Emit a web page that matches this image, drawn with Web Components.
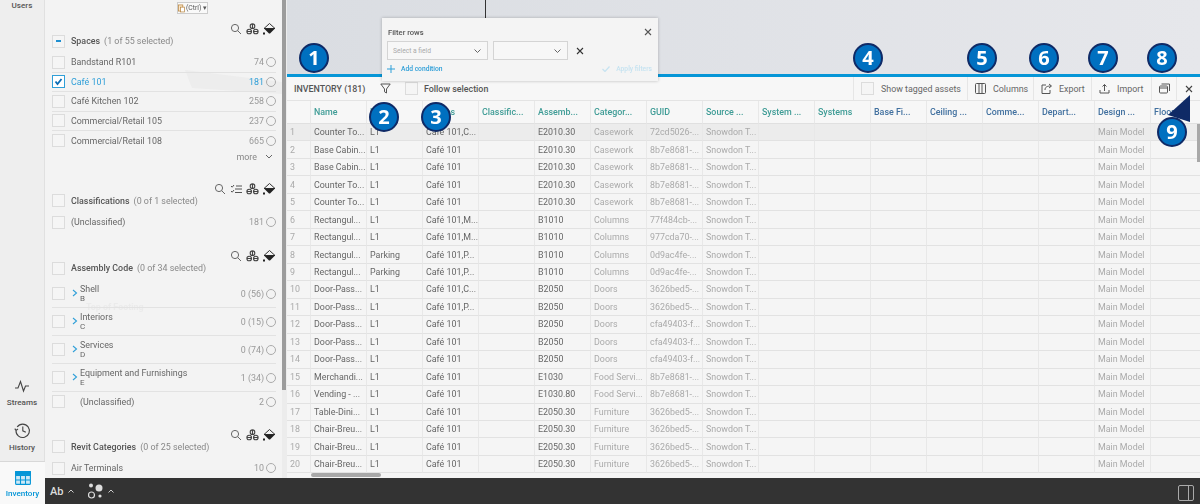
<!DOCTYPE html>
<html>
<head>
<meta charset="utf-8">
<style>
  html, body { margin: 0; padding: 0; height: 100%; overflow: hidden; background: #f4f4f4; }
  body { font-family: Roboto, "Noto Sans", sans-serif; font-size: 8.9px; color: #555; }
</style>
</head>
<body>
<app-shell>
  <side-rail slot="rail"></side-rail>
  <facet-panel slot="facets"></facet-panel>
  <model-view slot="view"></model-view>
  <inv-toolbar slot="toolbar"></inv-toolbar>
  <inv-table slot="table"></inv-table>
  <bottom-bar slot="bottom"></bottom-bar>
  <filter-popup slot="overlay"></filter-popup>
  <num-badge slot="overlay" style="left:299px;top:43px">1</num-badge>
  <num-badge slot="overlay" style="left:369px;top:102px">2</num-badge>
  <num-badge slot="overlay" style="left:421px;top:102px">3</num-badge>
  <num-badge slot="overlay" style="left:853px;top:43px">4</num-badge>
  <num-badge slot="overlay" style="left:967px;top:43px">5</num-badge>
  <num-badge slot="overlay" style="left:1029px;top:43px">6</num-badge>
  <num-badge slot="overlay" style="left:1088px;top:43px">7</num-badge>
  <num-badge slot="overlay" style="left:1147px;top:43px">8</num-badge>
  <num-badge slot="overlay" style="left:1157px;top:117px" arrow>9</num-badge>
</app-shell>

<script>
const ICONS = {
  search: '<svg width="12" height="12" viewBox="0 0 12 12" fill="none" stroke="#666" stroke-width="1"><circle cx="5" cy="5" r="3.6"/><path d="M7.7 7.7 11 11"/></svg>',
  checks: '<svg width="12" height="12" viewBox="0 0 12 12" fill="none" stroke="#555" stroke-width="1"><path d="M1 3l1.2 1.2L4 2M1 8l1.2 1.2L4 7M6 3h6M5 6h7M5 9.500h7"/></svg>',
  group: '<svg width="13" height="12" viewBox="0 0 13 12" fill="none" stroke="#444" stroke-width="1.1"><circle cx="6.500" cy="3.200" r="2.300"/><circle cx="3.200" cy="8.500" r="2.300"/><circle cx="9.800" cy="8.500" r="2.300"/><path d="M6.500 1v4.400M1 8.500h4.400M7.600 8.500H12"/></svg>',
  bucket: '<svg width="13" height="12" viewBox="0 0 13 12"><path d="M6.500.5 12 5.500H1z" fill="none" stroke="#333"/><path d="M1 5.500h11L7 10.500H6z" fill="#222"/><rect x="0" y="9.500" width="2" height="2" fill="#222"/></svg>',
  x: '<svg width="8" height="8" viewBox="0 0 8 8" fill="none" stroke="#444" stroke-width="1.100"><path d="M1 1l6 6M7 1 1 7"/></svg>'
};

class AppShell extends HTMLElement {
  constructor() {
    super();
    this.attachShadow({mode: 'open'}).innerHTML = `
      <style>
        :host { display: grid; grid-template-columns: 45px 1fr; width: 1200px; height: 504px; position: relative; overflow: hidden; filter: blur(.25px); }
        .work { display: grid; grid-template-rows: 478px 26px; min-width: 0; }
        .split { display: grid; grid-template-columns: 242px 1fr; min-height: 0; }
        .main { display: flex; flex-direction: column; min-width: 0; min-height: 0; }
      </style>
      <slot name="rail"></slot>
      <div class="work">
        <div class="split">
          <slot name="facets"></slot>
          <div class="main">
            <slot name="view"></slot>
            <slot name="toolbar"></slot>
            <slot name="table"></slot>
          </div>
        </div>
        <slot name="bottom"></slot>
      </div>
      <slot name="overlay"></slot>`;
  }
}

class SideRail extends HTMLElement {
  constructor() {
    super();
    this.attachShadow({mode: 'open'}).innerHTML = `
      <style>
        :host { display: flex; flex-direction: column; background: #eeeeee; border-right: 1px solid #e0e0e0; box-sizing: border-box; height: 504px; font-size: 8.100px; font-weight: 500; color: #555; text-align: center; }
        .users { height: 12px; line-height: 10px; }
        .grow { flex: 1; }
        .item { display: flex; flex-direction: column; align-items: center; justify-content: flex-end; height: 45px; gap: 3px; }
        .item svg { display: block; }
        .on { height: 43px; background: #f9f9f9; border-top: 1px solid #d8d8d8; color: #0696d7; box-sizing: border-box; padding-bottom: 6px; margin-top: 9px; margin-right: -1px; }
      </style>
      <div class="users">Users</div>
      <div class="grow"></div>
      <div class="item">
        <svg width="16" height="14" viewBox="0 0 16 14" fill="none" stroke="#444" stroke-width="1.100"><path d="M1 8 4 8 6.500 1.500 9.500 11 11.500 6 15 6"/></svg>
        <span>Streams</span>
      </div>
      <div class="item">
        <svg width="17" height="17" viewBox="0 0 17 17" fill="none" stroke="#444" stroke-width="1.100"><path d="M3.200 5A6.700 6.700 0 1 1 2 8.500M.8 6.600 2 8.500 4 7"/><path d="M8.800 4.500v4.300l3 1.400"/></svg>
        <span>History</span>
      </div>
      <div class="item on">
        <svg width="16" height="14" viewBox="0 0 16 14" fill="#cfe9f6" stroke="#0696d7" stroke-width="1.100"><rect x=".6" y=".6" width="14.800" height="12.800" rx="1"/><path d="M.6 4.500h14.800M.6 9h14.800M5.500 4.500v9M10.500 4.500v9" fill="none"/><rect x=".6" y=".6" width="14.800" height="2.800" fill="#0696d7"/></svg>
        <span>Inventory</span>
      </div>`;
  }
}

class FacetRow extends HTMLElement {
  constructor() {
    super();
    const tall = this.hasAttribute('code');
    const chev = this.hasAttribute('tree');
    const indent = this.hasAttribute('indent');
    this.attachShadow({mode: 'open'}).innerHTML = `
      <style>
        :host { display: flex; align-items: center; height: ${tall ? 28 : 19.5}px; box-sizing: border-box; border-bottom: 1px solid #e2e2e2; color: #666; }
        :host([last]) { border-bottom: 0; }
        :host([on]) { color: #2f9fd8; }
        .box { width: 11px; height: 11px; border: 1px solid #dcdcdc; background: #f5f5f5; flex: none; display: flex; }
        :host([on]) .box { border-color: #2f9fd8; background: #fff; }
        .chev { width: 8px; margin-left: 7px; flex: none; }
        .name { flex: 1; margin-left: ${chev ? 0 : (indent ? 15 : 6)}px; line-height: 10px; }
        .code { display: block; font-size: 8px; }
        .n { color: #999; margin-right: 2px; }
        :host([on]) .n { color: #2f9fd8; }
        .radio { width: 8px; height: 8px; border: 1px solid #aaa; border-radius: 50%; flex: none; }
      </style>
      <span class="box">${this.hasAttribute('on') ? '<svg width="11" height="11" viewBox="0 0 11 11" fill="none" stroke="#0a6cb5" stroke-width="1.800"><path d="M2.500 5.500 4.500 8 8.500 3"/></svg>' : ''}</span>
      ${chev ? '<span class="chev"><svg width="6" height="8" viewBox="0 0 6 8" fill="none" stroke="#2f9fd8" stroke-width="1.100"><path d="M1 1l3.500 3L1 7"/></svg></span>' : ''}
      <span class="name"><slot></slot>${tall ? '<span class="code">' + this.getAttribute('code') + '</span>' : ''}</span>
      <span class="n">${this.getAttribute('n')}</span>
      <span class="radio"></span>`;
  }
}

class FacetSection extends HTMLElement {
  constructor() {
    super();
    const icons = (this.getAttribute('icons') || 'search group bucket').split(' ').map(k => ICONS[k]).join('');
    const partial = this.hasAttribute('partial');
    this.attachShadow({mode: 'open'}).innerHTML = `
      <style>
        :host { display: block; }
        .tools { display: flex; justify-content: flex-end; align-items: center; gap: 4px; height: 14px; }
        .tools svg { display: block; }
        .head { display: flex; align-items: center; height: 14px; margin-top: -2px; margin-bottom: 5px; color: #888; }
        .box { width: 11px; height: 11px; border: 1px solid #dcdcdc; background: #f5f5f5; flex: none; margin-right: 6px; display: flex; align-items: center; justify-content: center; }
        .box i { width: 5px; height: 1.500px; background: #1f8fd0; }
        b { color: #555; font-weight: 500; margin-right: 4px; }
      </style>
      <div class="tools">${icons}</div>
      <div class="head"><span class="box">${partial ? '<i></i>' : ''}</span><b>${this.getAttribute('title')}</b> ${this.getAttribute('sel')}</div>
      <slot></slot>`;
  }
}

class FacetPanel extends HTMLElement {
  constructor() {
    super();
    this.attachShadow({mode: 'open'}).innerHTML = `
      <style>
        :host { display: block; position: relative; height: 478px; overflow: hidden; background: #f3f3f3; }
        .body { position: relative; width: 224px; padding: 22px 0 0 7px; }
        .more { display: flex; justify-content: flex-end; align-items: center; gap: 8px; height: 12px; padding-right: 3px; margin-bottom: 19px; color: #888; }
        .gap { height: 17px; }
        .gap.b { height: 16px; }
        .track { position: absolute; left: 237px; top: 0; bottom: 0; width: 5px; background: #ececec; }
        .track i { display: block; width: 4px; height: 390px; background: #9c9c9c; }
        .ctrl { position: absolute; left: 132px; top: 2px; height: 12px; width: 31px; box-sizing: border-box; border: 1px solid #ccc; background: #f9f9f9; font-size: 6.800px; display: flex; align-items: center; justify-content: center; gap: 1px; color: #555; white-space: nowrap; }
        .ghost { position: absolute; left: 41px; top: 303px; line-height: 8px; font-weight: 700; color: #ebebeb; }
        svg.bg { position: absolute; left: 0; top: 0; }
      </style>
      <svg class="bg" width="237" height="478"><path d="M140 70l97 12v12l-90-6z" fill="#ededed"/></svg>
      <div class="ghost">Top of Footing</div>
      <div class="ctrl"><svg width="8" height="10" viewBox="0 0 8 10" fill="#fbe6c8" stroke="#b5813a" stroke-width=".8"><rect x=".5" y="1.500" width="5" height="7"/><rect x="3" y="4" width="4.500" height="5.500" fill="#fff"/></svg>(Ctrl) ▾</div>
      <div class="body">
        <facet-section title="Spaces" sel="(1 of 55 selected)" partial>
          <facet-row n="74">Bandstand R101</facet-row>
          <facet-row n="181" on>Café 101</facet-row>
          <facet-row n="258">Café Kitchen 102</facet-row>
          <facet-row n="237">Commercial/Retail 105</facet-row>
          <facet-row n="665" last>Commercial/Retail 108</facet-row>
          <div class="more">more <svg width="8" height="5" viewBox="0 0 8 5" fill="none" stroke="#666"><path d="M1 1l3 3 3-3"/></svg></div>
        </facet-section>
        <facet-section title="Classifications" sel="(0 of 1 selected)" icons="search checks group bucket">
          <facet-row n="181" last>(Unclassified)</facet-row>
        </facet-section>
        <div class="gap"></div>
        <facet-section title="Assembly Code" sel="(0 of 34 selected)">
          <facet-row n="0 (56)" tree code="B">Shell</facet-row>
          <facet-row n="0 (15)" tree code="C">Interiors</facet-row>
          <facet-row n="0 (74)" tree code="D">Services</facet-row>
          <facet-row n="1 (34)" tree code="E">Equipment and Furnishings</facet-row>
          <facet-row n="2" indent last>(Unclassified)</facet-row>
        </facet-section>
        <div class="gap b"></div>
        <facet-section title="Revit Categories" sel="(0 of 25 selected)">
          <facet-row n="10" last>Air Terminals</facet-row>
        </facet-section>
      </div>
      <div class="track"><i></i></div>`;
  }
}

class ModelView extends HTMLElement {
  constructor() {
    super();
    this.attachShadow({mode: 'open'}).innerHTML = `
      <style>
        :host { display: block; height: 74px; flex: none; background: linear-gradient(90deg, #dadde2, #e6e7eb); }
        svg { display: block; }
      </style>
      <svg width="913" height="74" fill="none"><path d="M198.500 0v18" stroke="#333"/></svg>`;
  }
}

class ToolBtn extends HTMLElement {
  constructor() {
    super();
    this.attachShadow({mode: 'open'}).innerHTML = `
      <style>
        :host { display: flex; flex: none; align-items: center; gap: 7px; padding: 0 0 0 7px; border-left: 1px solid #e6e6e6; height: 100%; color: #666; box-sizing: border-box; white-space: nowrap; }
        ::slotted(svg) { display: block; }
      </style>
      <slot></slot>`;
  }
}

class InvToolbar extends HTMLElement {
  constructor() {
    super();
    this.attachShadow({mode: 'open'}).innerHTML = `
      <style>
        :host { display: flex; flex: none; flex-direction: column; height: 27px; background: #f7f7f7; }
        .blue { height: 3px; background: #0696d7; flex: none; }
        .bar { flex: 1; display: flex; align-items: center; border-bottom: 1px solid #e4e4e4; padding-left: 7px; }
        .title { font-weight: 500; color: #555; width: 86px; }
        .box { width: 11px; height: 11px; border: 1px solid #dcdcdc; background: #f5f5f5; flex: none; }
        .follow { margin-left: 6px; font-weight: 500; color: #555; }
        .funnel { display: block; width: 11px; margin-right: 14px; }
        .grow { flex: 1; }
      </style>
      <div class="blue"></div>
      <div class="bar">
        <span class="title">INVENTORY (181)</span>
        <svg class="funnel" width="11" height="11" viewBox="0 0 11 11" fill="none" stroke="#555"><path d="M.8 1h9.400L6.500 6v4L4.500 8.800V6z"/></svg>
        <span class="box"></span>
        <span class="follow">Follow selection</span>
        <span class="grow"></span>
        <tool-btn style="width:114px"><span class="box"></span>Show tagged assets</tool-btn>
        <tool-btn style="width:66px"><svg width="11" height="11" viewBox="0 0 11 11" fill="none" stroke="#555"><rect x=".5" y=".5" width="10" height="10" rx="1"/><path d="M4 .5v10M7 .5v10"/></svg>Columns</tool-btn>
        <tool-btn style="width:58px"><svg width="11" height="11" viewBox="0 0 11 11" fill="none" stroke="#555"><path d="M5 2H1v8.500h8V7M4 7c0-3 2-4 6-4M8 1l2.500 2L8 5"/></svg>Export</tool-btn>
        <tool-btn style="width:60px"><svg width="11" height="11" viewBox="0 0 11 11" fill="none" stroke="#555"><path d="M1 7v3h9V7M5.500 8V1.500M3.500 3.500l2-2 2 2"/></svg>Import</tool-btn>
        <tool-btn style="width:25px"><svg width="11" height="11" viewBox="0 0 11 11" fill="none" stroke="#555"><rect x=".5" y="3" width="8" height="7" rx="1"/><path d="M2.500 1h8v7M.5 5h8"/></svg></tool-btn>
        <tool-btn style="width:24px;padding-left:8px"><svg width="8" height="8" viewBox="0 0 8 8" fill="none" stroke="#444" stroke-width="1.100"><path d="M1 1l6 6M7 1 1 7"/></svg></tool-btn>
      </div>`;
  }
}

const HEADS = [['Name','t'],['Level','t'],['Spaces','t'],['Classific...','t'],['Assemb...','t'],['Categor...','t'],['GUID','t'],['Source ...','t'],['System ...','t'],['Systems','t'],['Base Fi...','b'],['Ceiling ...','b'],['Comme...','b'],['Depart...','b'],['Design ...','b'],['Floor','b']];
const g1 = '8b7e8681-...', d1 = '3626bed5-...', c1 = 'cfa49403-f...', p1 = '0d9ac4fe-...';
const ROWS = [
  ['Counter To...','L1','Café 101,C...','E2010.30','Casework','72cd5026-...'],
  ['Base Cabin...','L1','Café 101','E2010.30','Casework',g1],
  ['Base Cabin...','L1','Café 101','E2010.30','Casework',g1],
  ['Counter To...','L1','Café 101','E2010.30','Casework',g1],
  ['Counter To...','L1','Café 101','E2010.30','Casework',g1],
  ['Rectangul...','L1','Café 101,M...','B1010','Columns','77f484cb-...'],
  ['Rectangul...','L1','Café 101,M...','B1010','Columns','977cda70-...'],
  ['Rectangul...','Parking','Café 101,P...','B1010','Columns',p1],
  ['Rectangul...','Parking','Café 101,P...','B1010','Columns',p1],
  ['Door-Pass...','L1','Café 101,C...','B2050','Doors',d1],
  ['Door-Pass...','L1','Café 101,P...','B2050','Doors',d1],
  ['Door-Pass...','L1','Café 101','B2050','Doors',c1],
  ['Door-Pass...','L1','Café 101','B2050','Doors',c1],
  ['Door-Pass...','L1','Café 101','B2050','Doors',c1],
  ['Merchandi...','L1','Café 101','E1030','Food Servi...',g1],
  ['Vending - ...','L1','Café 101','E1030.80','Food Servi...',g1],
  ['Table-Dini...','L1','Café 101','E2050.30','Furniture',d1],
  ['Chair-Breu...','L1','Café 101','E2050.30','Furniture',d1],
  ['Chair-Breu...','L1','Café 101','E2050.30','Furniture',d1],
  ['Chair-Breu...','L1','Café 101','E2050.30','Furniture',d1]
];

class InvTable extends HTMLElement {
  constructor() {
    super();
    let html = '<div class="c hd"></div>';
    HEADS.forEach(h => { html += `<div class="c hd ${h[1]}">${h[0]}</div>`; });
    ROWS.forEach((r, i) => {
      const cls = i === 0 ? ' first' : '';
      html += `<div class="c num${cls}">${i + 1}</div>`;
      html += `<div class="c${cls}">${r[0]}</div><div class="c${cls}">${r[1]}</div><div class="c${cls}">${r[2]}</div><div class="c${cls}"></div>`;
      html += `<div class="c${cls}">${r[3]}</div><div class="c dim${cls}">${r[4]}</div><div class="c dim${cls}">${r[5]}</div><div class="c dim${cls}">Snowdon T...</div>`;
      for (let k = 0; k < 6; k++) html += `<div class="c${cls}"></div>`;
      html += `<div class="c dim${cls}">Main Model</div><div class="c${cls}"></div>`;
    });
    this.attachShadow({mode: 'open'}).innerHTML = `
      <style>
        :host { display: block; flex: 1; position: relative; overflow: hidden; background: #f5f5f5; }
        .grid { display: grid; grid-template-columns: 24px repeat(16, 56px); grid-template-rows: 23px repeat(20, 17.47px); }
        .c { box-sizing: border-box; border-right: 1px solid #e8e8e8; border-bottom: 1px solid #e2e2e2; padding-left: 3px; display: flex; align-items: center; white-space: nowrap; overflow: hidden; color: #666; min-width: 0; }
        .hd { font-weight: 500; border-bottom: 1px solid #e0e0e0; background: #f7f7f7; }
        .t { color: #3f9c96; }
        .b { color: #41709f; }
        .num { color: #aaa; }
        .dim { color: #aaa; }
        .first { background: #ececec; }
        .hbar { position: absolute; left: 24px; top: 372px; width: 70px; height: 4px; border-radius: 2px; background: #a8a8a8; }
        .vbar { position: absolute; right: 0; top: 23px; width: 3px; height: 38px; background: #a8a8a8; }
      </style>
      <div class="grid">${html}</div>
      <div class="hbar"></div>
      <div class="vbar"></div>`;
  }
}

class BottomBar extends HTMLElement {
  constructor() {
    super();
    this.attachShadow({mode: 'open'}).innerHTML = `
      <style>
        :host { display: flex; align-items: center; background: #333; color: #ddd; font-size: 11px; padding: 0 6px 0 5px; }
        .ab { margin-right: 5px; font-weight: 500; }
        .dots { margin-left: 14px; margin-right: 3px; }
        .grow { flex: 1; }
        svg { display: block; }
      </style>
      <span class="ab">Ab</span>
      <svg width="6" height="4" viewBox="0 0 6 4" fill="none" stroke="#ccc"><path d="M.5 3.500 3 1l2.500 2.500"/></svg>
      <svg class="dots" width="17" height="17" viewBox="0 0 17 17"><circle cx="3" cy="2.500" r="2" fill="#ddd"/><circle cx="11" cy="5" r="3.500" fill="#ddd"/><circle cx="3.500" cy="12" r="3" fill="none" stroke="#ddd" stroke-width="1.200"/><circle cx="12" cy="13" r="1.600" fill="#ddd"/></svg>
      <svg width="6" height="4" viewBox="0 0 6 4" fill="none" stroke="#ccc"><path d="M.5 3.500 3 1l2.500 2.500"/></svg>
      <span class="grow"></span>
      <svg style="margin-top:4px" width="16" height="16" viewBox="0 0 16 16" fill="none" stroke="#aaa"><rect x=".5" y=".5" width="15" height="15" rx="1.500"/><path d="M10.500 .5v15"/></svg>`;
  }
}

class FilterPopup extends HTMLElement {
  constructor() {
    super();
    this.attachShadow({mode: 'open'}).innerHTML = `
      <style>
        :host { position: absolute; left: 382px; top: 18px; width: 276px; height: 63px; box-sizing: border-box; background: #f4f4f4; box-shadow: 0 0 3px rgba(0,0,0,.25); padding: 7px 6px 0 5px; font-size: 6.700px; display: flex; flex-direction: column; color: #555; }
        .top { display: flex; justify-content: space-between; align-items: center; height: 12px; font-size: 7.600px; font-weight: 500; margin-top: 1px; padding-left: 1px; }
        .line { display: flex; align-items: center; margin-top: 3px; gap: 5px; }
        .sel { box-sizing: border-box; height: 19px; border: 1px solid #d4d4d4; background: #f7f7f7; display: flex; align-items: center; justify-content: space-between; padding: 0 6px 0 5px; color: #aaa; }
        .a { width: 101px; }
        .b { width: 75px; margin-right: 3px; }
        .foot { display: flex; justify-content: space-between; align-items: center; margin-top: 5px; color: #2f9fd8; font-weight: 500; }
        .add { display: flex; align-items: center; gap: 6px; }
        .apply { display: flex; align-items: center; gap: 6px; color: #c6e3f1; }
        svg { display: block; }
      </style>
      <div class="top"><span>Filter rows</span>${ICONS.x.replace('stroke="#444"','stroke="#555"')}</div>
      <div class="line">
        <span class="sel a">Select a field <svg width="7" height="4" viewBox="0 0 7 4" fill="none" stroke="#666"><path d="M.5.5l3 3 3-3"/></svg></span>
        <span class="sel b"><span></span><svg width="7" height="4" viewBox="0 0 7 4" fill="none" stroke="#666"><path d="M.5.5l3 3 3-3"/></svg></span>
        ${ICONS.x.replace('stroke="#444"','stroke="#333"')}
      </div>
      <div class="foot">
        <span class="add"><svg width="8" height="8" viewBox="0 0 8 8" stroke="#2f9fd8"><path d="M4 0v8M0 4h8"/></svg>Add condition</span>
        <span class="apply"><svg width="8" height="6" viewBox="0 0 8 6" fill="none" stroke="#c6e3f1" stroke-width="1.200"><path d="M.5 3 3 5.500 7.500.5"/></svg>Apply filters</span>
      </div>`;
  }
}

class NumBadge extends HTMLElement {
  constructor() {
    super();
    const arrow = this.hasAttribute('arrow');
    this.attachShadow({mode: 'open'}).innerHTML = `
      <style>
        :host { position: absolute; width: 30px; height: 30px; }
        .dot { position: absolute; inset: 0; box-sizing: border-box; border: 2.500px solid #0f2a66; border-radius: 50%; background: #0070c0; color: #fff; font: 700 20px/25px "Open Sans", sans-serif; text-align: center; }
        svg { position: absolute; left: 10px; top: -23px; }
      </style>
      ${arrow ? '<svg width="24" height="30" viewBox="0 0 24 30"><path d="M23 1 1 21l22 7z" fill="#0f2a66"/></svg>' : ''}
      <div class="dot"><slot></slot></div>`;
  }
}

customElements.define('facet-row', FacetRow);
customElements.define('facet-section', FacetSection);
customElements.define('facet-panel', FacetPanel);
customElements.define('side-rail', SideRail);
customElements.define('model-view', ModelView);
customElements.define('tool-btn', ToolBtn);
customElements.define('inv-toolbar', InvToolbar);
customElements.define('inv-table', InvTable);
customElements.define('bottom-bar', BottomBar);
customElements.define('filter-popup', FilterPopup);
customElements.define('num-badge', NumBadge);
customElements.define('app-shell', AppShell);
</script>
</body>
</html>
